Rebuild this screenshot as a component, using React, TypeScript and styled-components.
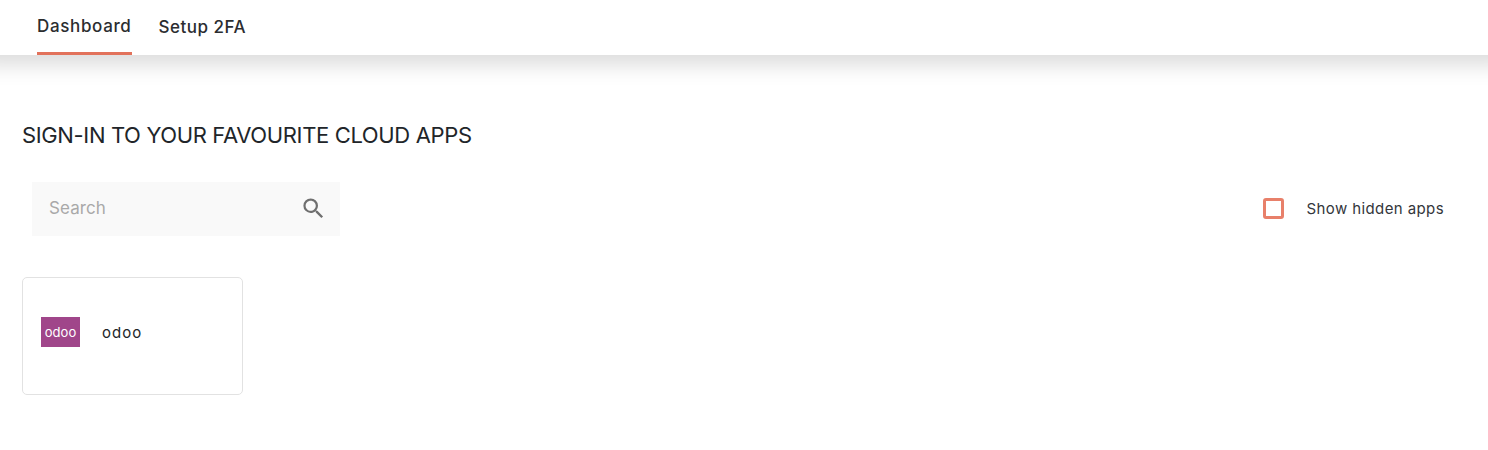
import styled, {createGlobalStyle} from "styled-components";

const GlobalStyle = createGlobalStyle`
  html, body {
    margin: 0;
    padding: 0;
    background: #fff;
    font-family: "Inter", "Liberation Sans", sans-serif;
    color: #212529;
  }
`;

const Nav = styled.nav`
  height: 55px;
  padding-left: 37px;
  display: flex;
  gap: 27px;
  background: #fff;
  box-shadow: 0 -10px 20px 20px rgba(0, 0, 0, 0.14);
`;

const Tab = styled.a<{ $active?: boolean }>`
  height: 55px;
  box-sizing: border-box;
  padding-top: ${props => props.$active ? "16px" : "17px"};
  font-size: 17px;
  line-height: 20px;
  font-weight: 550;
  letter-spacing: ${props => props.$active ? "0.65px" : "0.5px"};
  color: #2b2d30;
  border-bottom: 3px solid ${props => props.$active ? "#e2725b" : "transparent"};
`;

const Main = styled.main`
  padding: 0 44px 0 22px;
`;

const Title = styled.h1`
  margin: 0;
  padding-top: 66px;
  font-size: 22px;
  line-height: 28px;
  font-weight: 400;
  letter-spacing: -0.36px;
  color: #212529;
`;

const Toolbar = styled.div`
  margin-top: 33px;
  padding-left: 10px;
  display: flex;
  justify-content: space-between;
  align-items: center;
`;

const SearchBox = styled.div`
  width: 308px;
  height: 54px;
  box-sizing: border-box;
  padding: 0 13px 2px 17px;
  display: flex;
  align-items: center;
  justify-content: space-between;
  background: #f9f9f9;
`;

const SearchInput = styled.input`
  border: 0;
  outline: 0;
  background: transparent;
  width: 200px;
  padding: 0;
  font-family: "Inter", "Liberation Sans", sans-serif;
  font-size: 17px;
  letter-spacing: 0.1px;

  &::placeholder {
    color: #a9a9a9;
    opacity: 1;
  }
`;

const CheckLabel = styled.label`
  display: flex;
  align-items: center;
  gap: 22px;
  padding-bottom: 2px;
  font-size: 15px;
  letter-spacing: 0.4px;
  color: #33363b;
`;

const CheckBox = styled.span`
  width: 15px;
  height: 15px;
  border: 3px solid #e8806a;
  border-radius: 3px;
`;

const CardGrid = styled.div`
  margin-top: 41px;
  display: flex;
`;

const Card = styled.div`
  width: 221px;
  height: 118px;
  box-sizing: border-box;
  padding: 0 0 8px 18px;
  display: flex;
  align-items: center;
  gap: 22px;
  border: 1px solid #e2e2e2;
  border-radius: 5px;
`;

const Logo = styled.div`
  width: 39px;
  height: 30px;
  display: flex;
  align-items: center;
  justify-content: center;
  background: #a0468a;
  color: #fff;
  font-size: 13px;
  font-weight: 400;
  letter-spacing: 0.1px;
`;

const AppName = styled.span`
  font-size: 15px;
  font-weight: 400;
  letter-spacing: 1px;
  color: #212529;
`;

function SearchIcon() {
    return <svg width="27" height="27" viewBox="0 0 24 24" fill="#6f6f6f">
        <path d="M15.5 14h-.79l-.28-.27A6.47 6.47 0 0 0 16 9.5 6.5 6.5 0 1 0 9.5 16c1.61 0 3.09-.59 4.23-1.57l.27.28v.79l5 4.99L20.49 19l-4.99-5zm-6 0C7.01 14 5 11.99 5 9.5S7.01 5 9.5 5 14 7.01 14 9.5 11.99 14 9.5 14z"/>
    </svg>
}

function App() {
    return <>
        <GlobalStyle/>
        <Nav>
            <Tab $active>Dashboard</Tab>
            <Tab>Setup 2FA</Tab>
        </Nav>
        <Main>
            <Title>SIGN-IN TO YOUR FAVOURITE CLOUD APPS</Title>
            <Toolbar>
                <SearchBox>
                    <SearchInput placeholder="Search"/>
                    <SearchIcon/>
                </SearchBox>
                <CheckLabel>
                    <CheckBox/>
                    Show hidden apps
                </CheckLabel>
            </Toolbar>
            <CardGrid>
                <Card>
                    <Logo>odoo</Logo>
                    <AppName>odoo</AppName>
                </Card>
            </CardGrid>
        </Main>
    </>
}

export default App;
